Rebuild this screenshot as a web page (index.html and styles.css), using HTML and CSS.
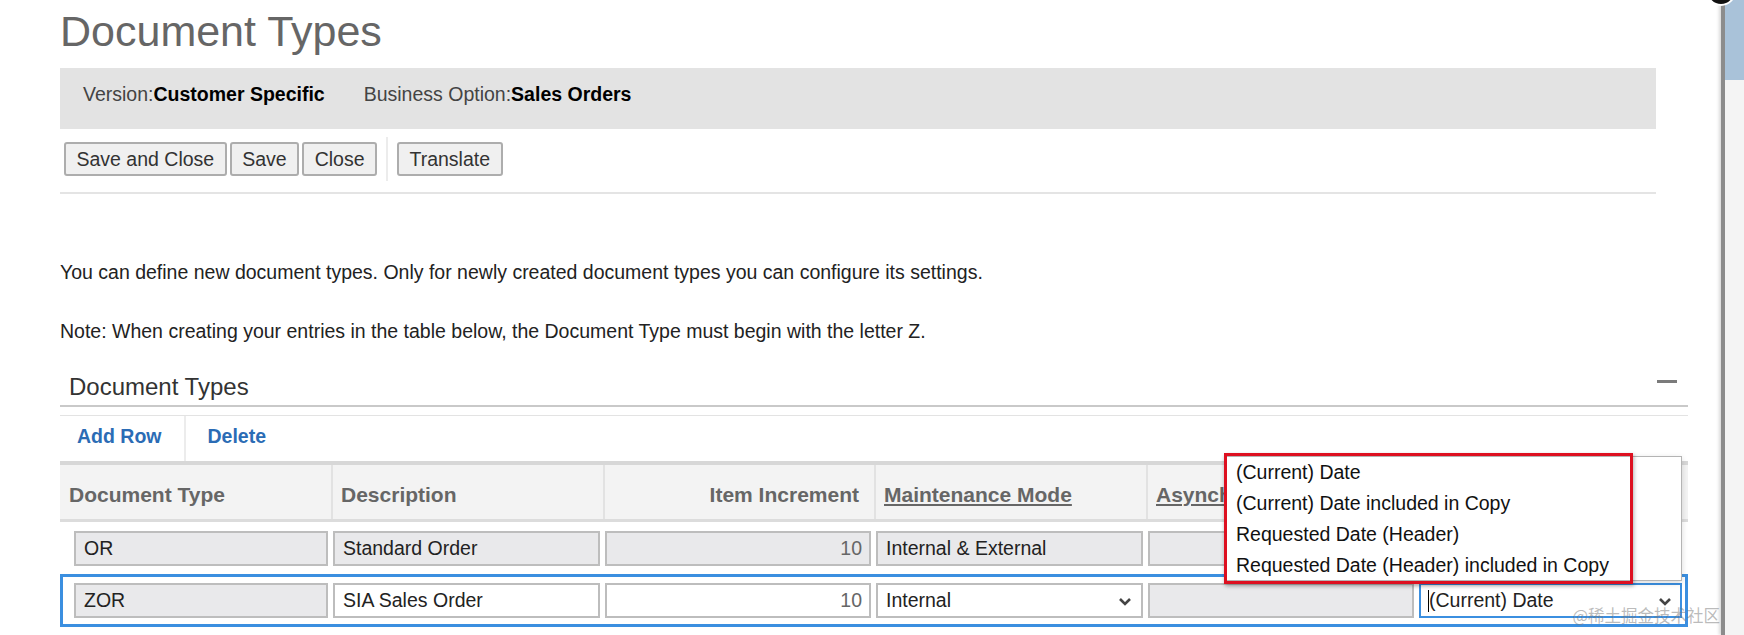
FILE: index.html
```html
<!DOCTYPE html>
<html lang="en">
<head>
    <meta charset="UTF-8">
    <title>Document Types</title>
    <link rel="stylesheet" href="styles.css">
</head>
<body>
<div class="page">
    <h1 class="title">Document Types</h1>
    <div class="context-bar">
        <span class="ctx">Version:<b>Customer Specific</b></span>
        <span class="ctx">Business Option:<b>Sales Orders</b></span>
    </div>
    <div class="toolbar">
        <button class="btn">Save and Close</button>
        <button class="btn">Save</button>
        <button class="btn">Close</button>
        <span class="tb-sep"></span>
        <button class="btn">Translate</button>
    </div>

    <p class="note first">You can define new document types. Only for newly created document types you can configure its settings.</p>
    <p class="note">Note: When creating your entries in the table below, the Document Type must begin with the letter Z.</p>

    <div class="panel">
        <div class="panel-head">
            <h2>Document Types</h2>
            <span class="collapse"></span>
        </div>
        <div class="actions">
            <a class="action">Add Row</a>
            <a class="action">Delete</a>
        </div>
        <div class="grid">
            <div class="grid-row grid-head">
                <div class="hcell">Document Type</div>
                <div class="hcell">Description</div>
                <div class="hcell right">Item Increment</div>
                <div class="hcell link">Maintenance Mode</div>
                <div class="hcell link">Asynch</div>
                <div class="hcell link"></div>
            </div>
            <div class="grid-row">
                <div class="cell"><div class="field ro">OR</div></div>
                <div class="cell"><div class="field ro">Standard Order</div></div>
                <div class="cell"><div class="field ro num">10</div></div>
                <div class="cell"><div class="field ro">Internal &amp; External</div></div>
                <div class="cell"><div class="field ro"></div></div>
                <div class="cell"><div class="field ro"></div></div>
            </div>
            <div class="grid-row selected">
                <div class="cell"><div class="field ro">ZOR</div></div>
                <div class="cell"><div class="field">SIA Sales Order</div></div>
                <div class="cell"><div class="field num">10</div></div>
                <div class="cell">
                    <div class="field select">Internal
                        <svg class="chev" width="14" height="9" viewBox="0 0 14 9"><polyline points="2,2 7,7 12,2" fill="none" stroke="#444" stroke-width="2.6"/></svg>
                    </div>
                </div>
                <div class="cell"><div class="field ro"></div></div>
                <div class="cell">
                    <div class="field select focus"><span class="caret"></span>(Current) Date
                        <svg class="chev" width="14" height="9" viewBox="0 0 14 9"><polyline points="2,2 7,7 12,2" fill="none" stroke="#444" stroke-width="2.6"/></svg>
                    </div>
                </div>
            </div>

            <ul class="dropdown">
                <li>(Current) Date</li>
                <li>(Current) Date included in Copy</li>
                <li>Requested Date (Header)</li>
                <li>Requested Date (Header) included in Copy</li>
            </ul>
            <div class="mark"></div>
        </div>
    </div>
</div>

<div class="side-edge"><div class="side-top"></div></div>
<div class="dot"></div>
<div class="watermark">@稀土掘金技术社区</div>
</body>
</html>
```

FILE: styles.css
```css
*{margin:0;padding:0;box-sizing:border-box;}
body{
    background:#fff;
    font-family:"Liberation Sans",Arial,sans-serif;
    font-size:19.5px;
    line-height:22px;
    color:#222;
    overflow:hidden;
}
.page{
    padding-left:60px;
    width:1700px;
}
.title{
    margin-top:7px;
    font-size:43px;
    line-height:48px;
    font-weight:normal;
    color:#666;
}
.context-bar{
    margin-top:13px;
    width:1596px;
    height:61px;
    padding:15px 23px 0;
    background:#e3e3e3;
    color:#444;
    display:flex;
    gap:39px;
}
.ctx b{color:#000;}

.toolbar{
    width:1596px;
    margin-top:8px;
    padding:0 0 11px 4px;
    border-bottom:2px solid #e4e4e4;
    display:flex;
    align-items:center;
    gap:3px;
}
.btn{
    height:34px;
    padding:0 10.5px;
    font:inherit;
    color:#333;
    background:#f0f0f0;
    border:2px solid #adadad;
    border-radius:3px;
}
.tb-sep{
    width:2px;
    height:44px;
    margin:0 6px;
    background:#ececec;
}

.note{margin-top:37px;}
.note.first{margin-top:67px;}

.panel{width:1628px;margin-top:31px;}
.panel-head{
    display:flex;
    justify-content:space-between;
    align-items:flex-start;
    padding:0 11px 4px 9px;
    border-bottom:2px solid #c9c9c9;
}
.panel-head h2{
    font-size:24px;
    line-height:28px;
    font-weight:normal;
    color:#333;
}
.collapse{
    width:20px;
    height:3px;
    background:#7b7b7b;
    margin-top:7px;
}
.actions{
    margin-top:8px;
    border-top:1px solid #e3e3e3;
    display:flex;
    height:46px;
}
.action{
    font-weight:bold;
    color:#2b6cb5;
    padding:0 23px 0 17px;
    line-height:40px;
}
.action + .action{
    border-left:2px solid #ececec;
    padding-left:21px;
}

.grid{
    position:relative;
    border-top:4px solid #d7d7d7;
}
.grid-row{
    display:grid;
    grid-template-columns:271px 272px 271px 272px 271px 271px;
}
.grid-head{
    height:57px;
    background:#f3f3f3;
    border-bottom:3px solid #dcdcdc;
}
.hcell{
    padding:5px 15px 0 8px;
    display:flex;
    align-items:center;
    font-size:21px;
    font-weight:bold;
    color:#666;
    border-left:2px solid #e2e2e2;
    white-space:nowrap;
    overflow:hidden;
}
.hcell:first-child{border-left:none;padding-left:9px;}
.hcell.right{justify-content:flex-end;}
.hcell.link{text-decoration:underline;}

.grid-row .cell{padding:0 3px 0 2px;}
.grid-row .cell:first-child{padding-left:14px;}
.grid-row .cell:last-child{padding-right:6px;}
.grid-row:not(.grid-head){height:48px;padding-top:9px;}
.grid-row.selected{
    margin-top:4px;
    height:53px;
    padding-top:9px;
    outline:3px solid #3b8fe0;
    outline-offset:-3px;
}
.field{
    position:relative;
    height:35px;
    padding:0 8px;
    line-height:31px;
    border:2px solid #bdbdbd;
    background:#fff;
    color:#222;
    white-space:nowrap;
}
.field.ro{background:#e9e9eb;}
.field.num{text-align:right;padding-right:7px;color:#666;}
.field.select .chev{position:absolute;right:9px;top:12px;}
.field.focus{border-color:#3b8fe0;padding-left:7px;}
.field.focus .chev{right:8px;}
.caret{
    display:inline-block;
    width:1px;
    height:22px;
    background:#000;
    vertical-align:-5px;
}

.dropdown{
    position:absolute;
    left:1166px;
    top:-9px;
    width:456px;
    height:125px;
    list-style:none;
    background:#fff;
    border:1px solid #b4b4b4;
    padding:0 0 0 9px;
    color:#111;
    box-shadow:0 2px 6px rgba(0,0,0,0.15);
}
.dropdown li{line-height:31px;}
.mark{
    position:absolute;
    left:1164px;
    top:-12px;
    width:409px;
    height:131px;
    border:3px solid #dd1020;
    box-shadow:1px 2px 4px rgba(0,0,0,0.3);
}

.side-edge{
    position:absolute;
    top:0;
    right:0;
    width:23px;
    height:635px;
    background:#f4f4f4;
    border-left:4px solid #8c8c8c;
    box-shadow:-2px 0 3px rgba(0,0,0,0.15);
}
.side-top{
    height:80px;
    background:#a9c2d9;
}
.dot{
    position:absolute;
    left:1706px;
    top:-24px;
    width:30px;
    height:30px;
    border-radius:50%;
    background:#111;
    border:2px solid #fff;
}
.watermark{
    position:absolute;
    right:24px;
    top:604px;
    font-family:"Noto Sans CJK SC",sans-serif;
    font-size:16.5px;
    line-height:22px;
    color:rgba(120,120,120,0.5);
}
```
